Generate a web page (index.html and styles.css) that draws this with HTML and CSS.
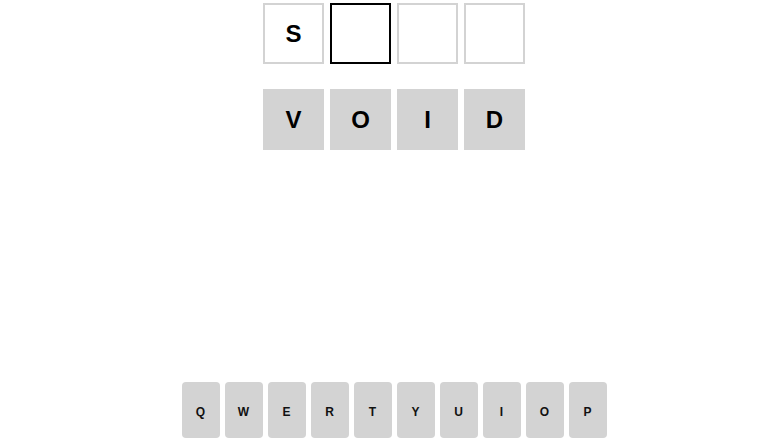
FILE: index.html
```html
<!DOCTYPE html>
<html>
<head>
<meta charset="utf-8">
<link rel="stylesheet" href="styles.css">
</head>
<body>
<div class="app">
  <div class="board">
    <div class="row">
      <div class="tile empty">S</div>
      <div class="tile active"></div>
      <div class="tile empty"></div>
      <div class="tile empty"></div>
    </div>
    <div class="row">
      <div class="tile filled">V</div>
      <div class="tile filled">O</div>
      <div class="tile filled">I</div>
      <div class="tile filled">D</div>
    </div>
  </div>
  <div class="keyboard">
    <div class="key">Q</div>
    <div class="key">W</div>
    <div class="key">E</div>
    <div class="key">R</div>
    <div class="key">T</div>
    <div class="key">Y</div>
    <div class="key">U</div>
    <div class="key">I</div>
    <div class="key">O</div>
    <div class="key">P</div>
  </div>
</div>
</body>
</html>
```
FILE: styles.css
```css
html, body {
  margin: 0;
  padding: 0;
  background: #ffffff;
}
body {
  font-family: "Liberation Sans", Arial, sans-serif;
  color: #000;
}
.app {
  height: 440px;
  box-sizing: border-box;
  padding-left: 8px;
  padding-top: 3px;
  padding-bottom: 2px;
  display: flex;
  flex-direction: column;
  align-items: center;
  overflow: hidden;
}
.board {
  display: flex;
  flex-direction: column;
  gap: 25px;
}
.row {
  display: flex;
  gap: 6px;
}
.tile {
  width: 61px;
  height: 61px;
  box-sizing: border-box;
  display: flex;
  align-items: center;
  justify-content: center;
  font-size: 24px;
  font-weight: bold;
}
.tile.empty {
  border: 2px solid #d3d3d3;
}
.tile.active {
  border: 2px solid #000;
}
.tile.filled {
  background: #d3d3d3;
}
.keyboard {
  margin-top: auto;
  display: flex;
  gap: 5px;
}
.key {
  width: 38px;
  height: 56px;
  background: #d3d3d3;
  border-radius: 4px;
  display: flex;
  align-items: center;
  justify-content: center;
  padding-top: 3px;
  box-sizing: border-box;
  font-size: 12px;
  font-weight: bold;
  color: #111;
}
```
